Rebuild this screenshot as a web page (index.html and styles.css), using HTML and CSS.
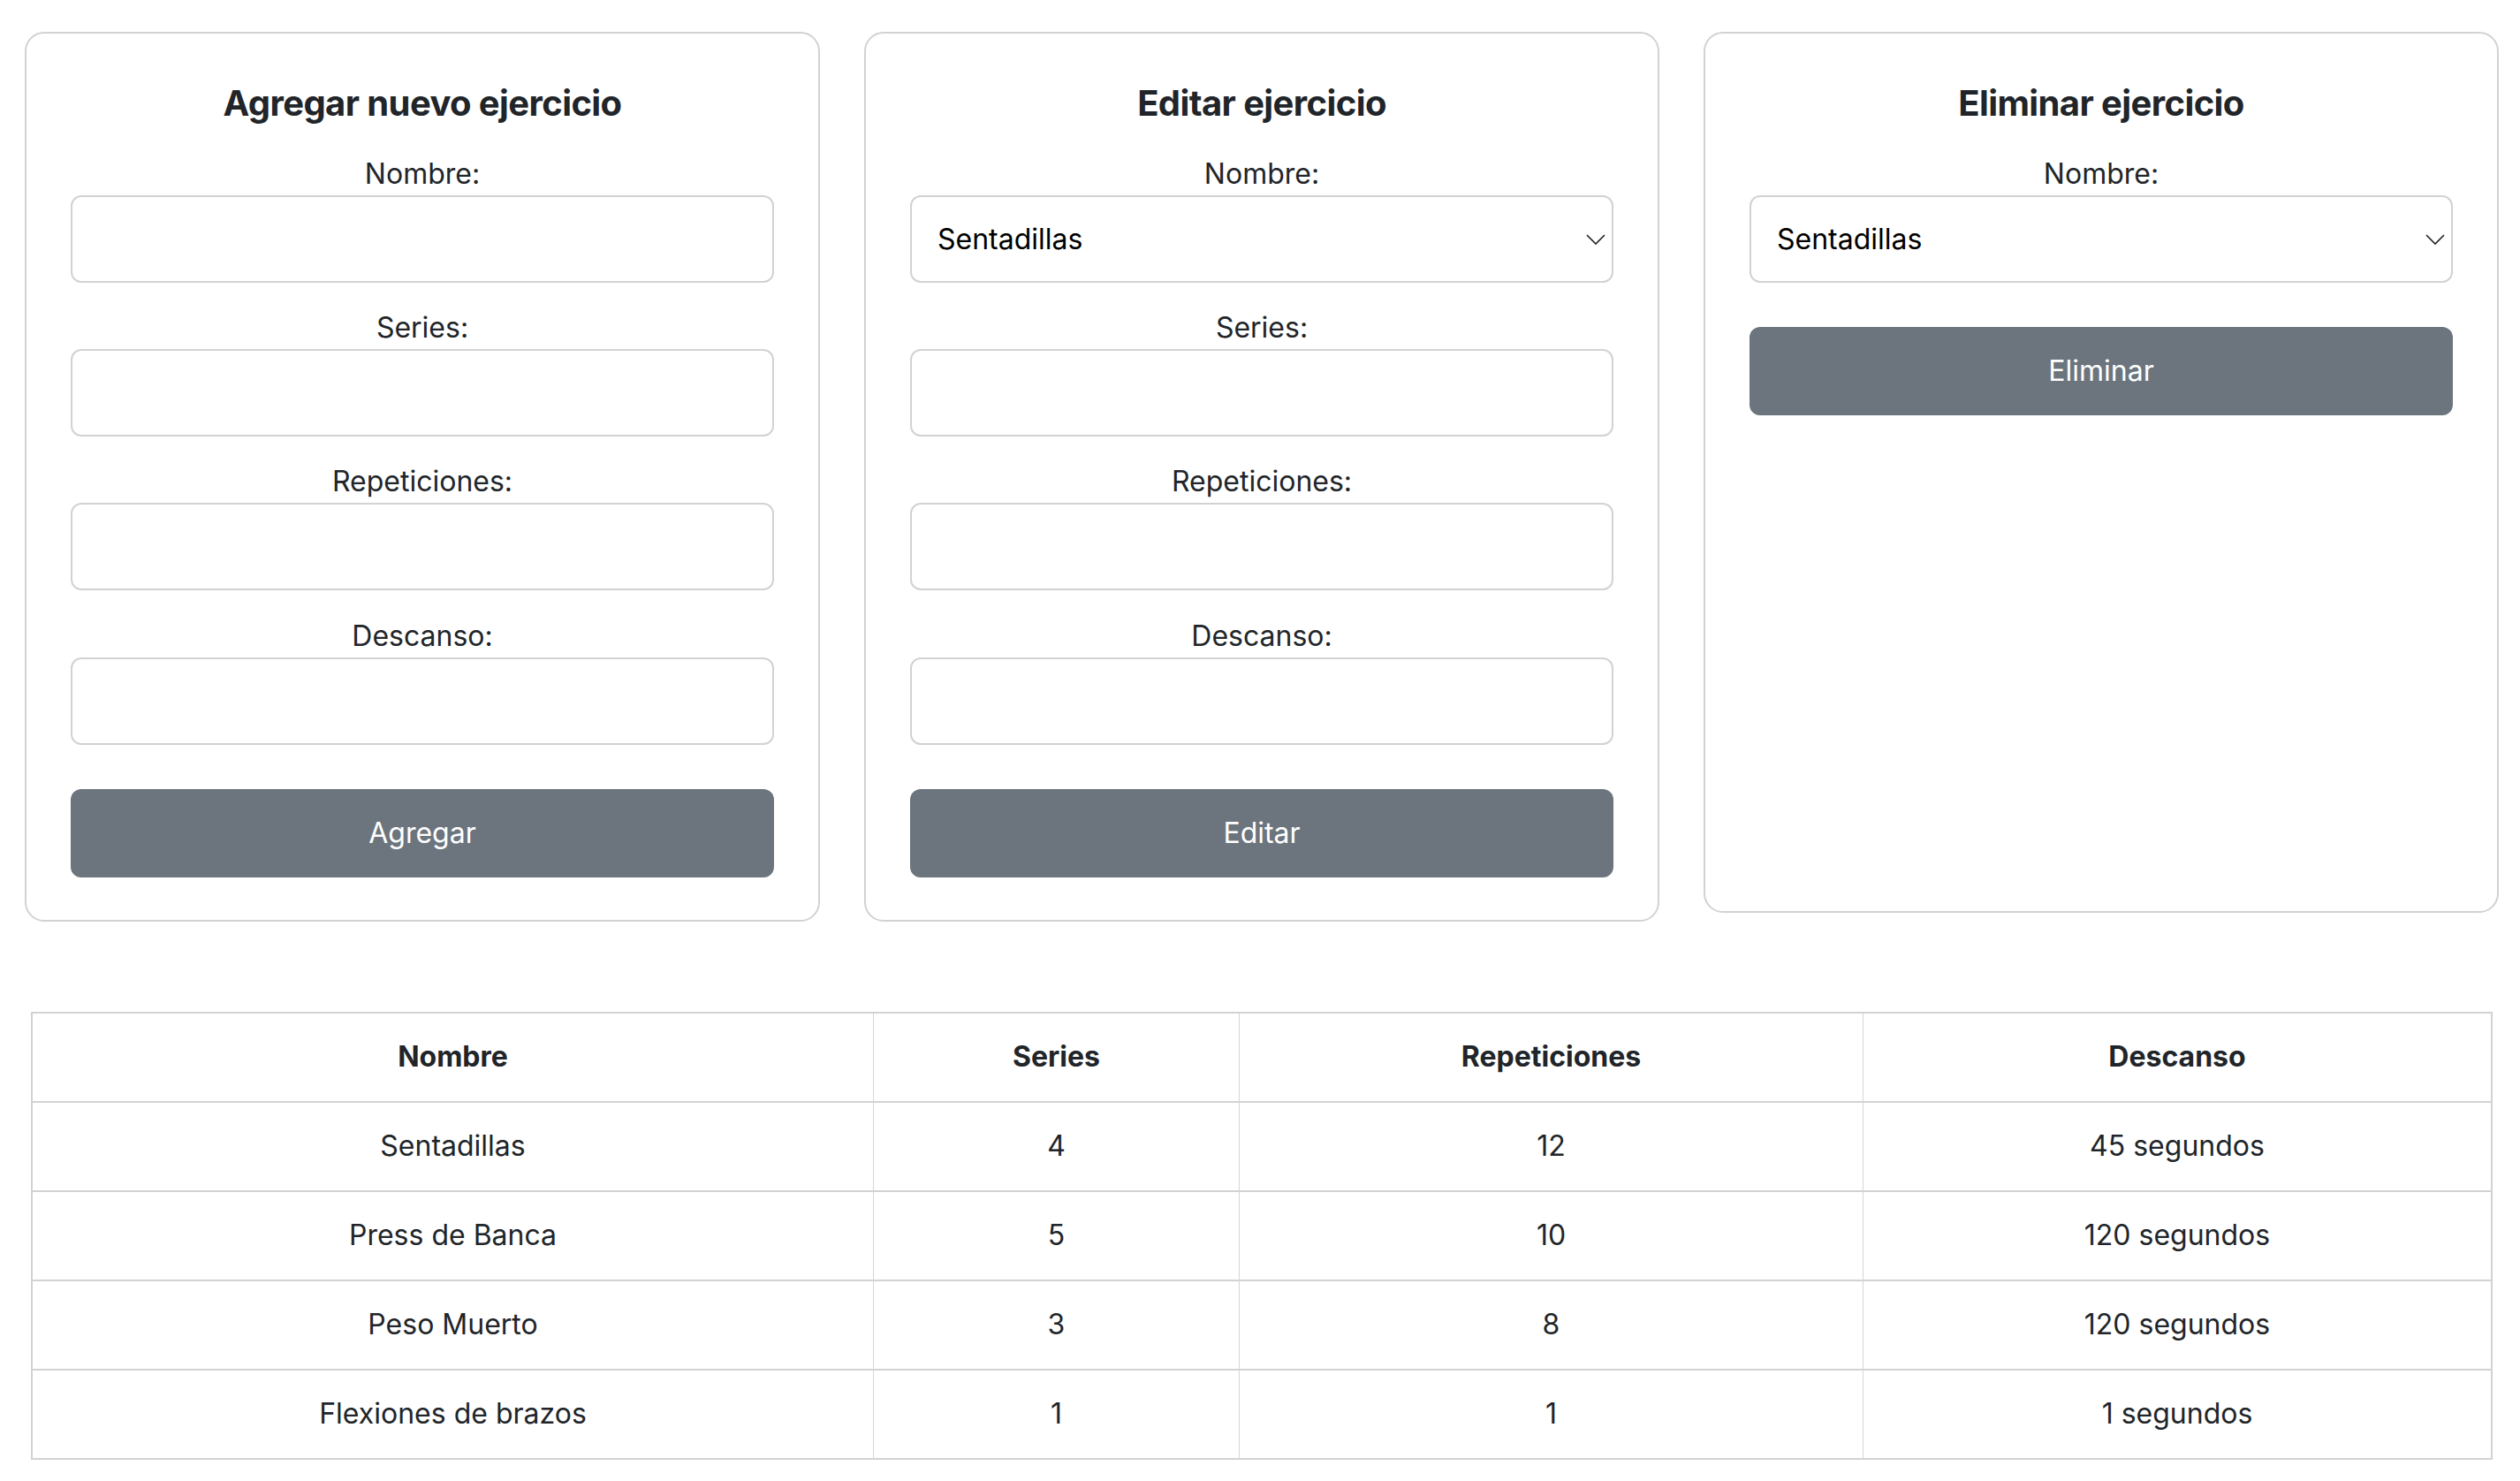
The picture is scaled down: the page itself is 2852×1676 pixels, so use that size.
FILE: index.html
```html
<!DOCTYPE html>
<html lang="es">
<head>
<meta charset="utf-8">
<title>Ejercicios</title>
<link rel="stylesheet" href="styles.css">
</head>
<body>
<div class="page">
  <div class="cards">
    <section class="card">
      <h2 class="card-title">Agregar nuevo ejercicio</h2>
      <div class="field">
        <label class="field-label">Nombre:</label>
        <input class="control" type="text">
      </div>
      <div class="field">
        <label class="field-label">Series:</label>
        <input class="control" type="text">
      </div>
      <div class="field">
        <label class="field-label">Repeticiones:</label>
        <input class="control" type="text">
      </div>
      <div class="field">
        <label class="field-label">Descanso:</label>
        <input class="control" type="text">
      </div>
      <button class="btn" type="button">Agregar</button>
    </section>

    <section class="card">
      <h2 class="card-title">Editar ejercicio</h2>
      <div class="field">
        <label class="field-label">Nombre:</label>
        <div class="select-wrap">
          <select class="control select">
            <option>Sentadillas</option>
            <option>Press de Banca</option>
            <option>Peso Muerto</option>
            <option>Flexiones de brazos</option>
          </select>
          <svg class="chevron" width="22" height="12" viewBox="0 0 22 12"><path d="M1 1 L11 11 L21 1" fill="none" stroke="#1d1d1f" stroke-width="1.6"/></svg>
        </div>
      </div>
      <div class="field">
        <label class="field-label">Series:</label>
        <input class="control" type="text">
      </div>
      <div class="field">
        <label class="field-label">Repeticiones:</label>
        <input class="control" type="text">
      </div>
      <div class="field">
        <label class="field-label">Descanso:</label>
        <input class="control" type="text">
      </div>
      <button class="btn" type="button">Editar</button>
    </section>

    <section class="card card-short">
      <h2 class="card-title">Eliminar ejercicio</h2>
      <div class="field">
        <label class="field-label">Nombre:</label>
        <div class="select-wrap">
          <select class="control select">
            <option>Sentadillas</option>
            <option>Press de Banca</option>
            <option>Peso Muerto</option>
            <option>Flexiones de brazos</option>
          </select>
          <svg class="chevron" width="22" height="12" viewBox="0 0 22 12"><path d="M1 1 L11 11 L21 1" fill="none" stroke="#1d1d1f" stroke-width="1.6"/></svg>
        </div>
      </div>
      <button class="btn" type="button">Eliminar</button>
    </section>
  </div>

  <table class="exercises">
    <thead>
      <tr>
        <th class="col-name">Nombre</th>
        <th class="col-series">Series</th>
        <th class="col-reps">Repeticiones</th>
        <th class="col-rest">Descanso</th>
      </tr>
    </thead>
    <tbody>
      <tr><td>Sentadillas</td><td>4</td><td>12</td><td>45 segundos</td></tr>
      <tr><td>Press de Banca</td><td>5</td><td>10</td><td>120 segundos</td></tr>
      <tr><td>Peso Muerto</td><td>3</td><td>8</td><td>120 segundos</td></tr>
      <tr><td>Flexiones de brazos</td><td>1</td><td>1</td><td>1 segundos</td></tr>
    </tbody>
  </table>
</div>
</body>
</html>
```

FILE: styles.css
```css
* { box-sizing: border-box; }

html, body {
  margin: 0;
  padding: 0;
  background: #ffffff;
}

body {
  font-family: Inter, "Liberation Sans", sans-serif;
  color: #212529;
  font-size: 32px;
  line-height: 48px;
}

.page {
  padding: 36px 24px 0 28px;
}

.cards {
  display: flex;
  gap: 50px;
  align-items: flex-start;
}

.card {
  width: 900px;
  border: 2px solid #d2d2d2;
  border-radius: 22px;
  padding: 55px 50px 48px;
  text-align: center;
}

.card-short {
  height: 997px;
}

.card-title {
  margin: 0 0 31.7px;
  font-size: 40px;
  line-height: 48px;
  font-weight: 700;
  letter-spacing: -0.6px;
  color: #212529;
}

.field {
  margin-bottom: 27.3px;
}

.field-label {
  display: block;
  font-size: 32px;
  line-height: 48px;
  color: #212529;
}

.control {
  display: block;
  width: 100%;
  height: 99px;
  border: 2px solid #d2d2d2;
  border-radius: 12px;
  background: #ffffff;
  font-family: Inter, "Liberation Sans", sans-serif;
  font-size: 32px;
  color: #000000;
  padding: 0 29px;
  margin: 0;
  outline: none;
  -webkit-appearance: none;
  appearance: none;
}

.select-wrap {
  position: relative;
}

.select {
  text-align: left;
  padding-right: 60px;
}

.chevron {
  position: absolute;
  right: 9px;
  top: 44px;
  pointer-events: none;
}

.btn {
  display: block;
  width: 100%;
  height: 100px;
  margin-top: 50px;
  border: none;
  border-radius: 12px;
  background: #6c757d;
  color: #ffffff;
  font-family: Inter, "Liberation Sans", sans-serif;
  font-size: 32px;
  line-height: 48px;
}

.exercises {
  margin: 102px 0 0 7px;
  width: 2786px;
  table-layout: fixed;
  border-collapse: separate;
  border-spacing: 0;
  border-top: 2px solid #d2d2d2;
  border-left: 2px solid #d2d2d2;
  border-right: 2px solid #d2d2d2;
}

.exercises th,
.exercises td {
  height: 101px;
  padding: 0 16px;
  text-align: center;
  vertical-align: middle;
  border-bottom: 2px solid #d2d2d2;
  font-size: 32px;
  line-height: 48px;
  color: #212529;
}

.exercises th {
  font-weight: 700;
}

.exercises th + th,
.exercises td + td {
  border-left: 1px solid #d6d6d6;
}

.col-name { width: 951px; }
.col-series { width: 414px; }
.col-reps { width: 706px; }
```
